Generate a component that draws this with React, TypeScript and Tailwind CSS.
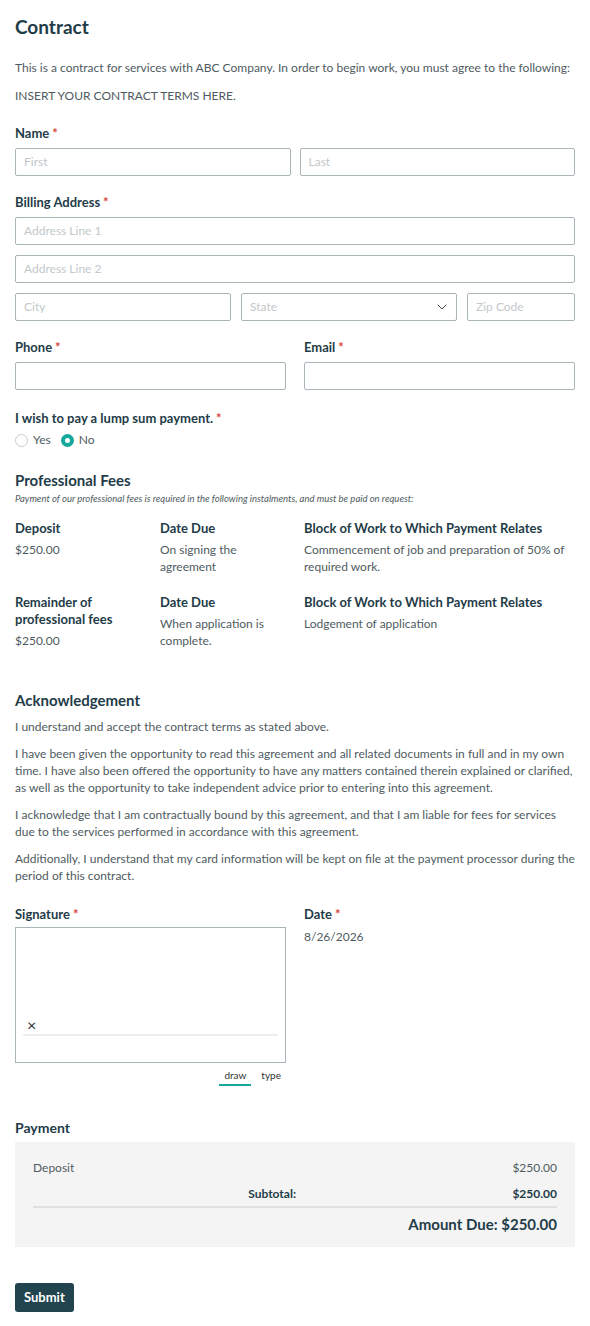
import { ChevronDown } from 'lucide-react';

const font = { fontFamily: 'Lato, "Open Sans", sans-serif' };

function Req() {
  return <span className="ml-[3px] text-[#d9423b]">*</span>;
}

function Label({ children, required = true }: { children: React.ReactNode; required?: boolean }) {
  return (
    <div className="mb-[7px] text-[13px] font-bold leading-[16px] text-[#1f3c48]">
      {children}
      {required && <Req />}
    </div>
  );
}

function Field({ placeholder = '', className = '' }: { placeholder?: string; className?: string }) {
  return (
    <div
      className={`flex h-[28px] items-center rounded-[2px] border border-[#a9b5b8] px-[8px] text-[12px] text-[#c3c8ca] ${className}`}
    >
      {placeholder}
    </div>
  );
}

export default function App() {
  return (
    <div className="min-h-[1326px] bg-white px-[15px] pt-[16px] text-[12px] text-[#4f5b61]" style={font}>
      {/* header */}
      <h1 className="text-[19px] font-bold leading-[22px] text-[#1f3c48]">Contract</h1>
      <p className="mt-[22px] leading-[16px]">
        This is a contract for services with ABC Company. In order to begin work, you must agree to the following:
      </p>
      <p className="mt-[12px] leading-[16px]">INSERT YOUR CONTRACT TERMS HERE.</p>

      {/* name */}
      <div className="mt-[21px]">
        <Label>Name</Label>
        <div className="flex gap-[9px]">
          <Field placeholder="First" className="flex-1" />
          <Field placeholder="Last" className="flex-1" />
        </div>
      </div>

      {/* billing address */}
      <div className="mt-[18px]">
        <Label>Billing Address</Label>
        <div className="flex flex-col gap-[10px]">
          <Field placeholder="Address Line 1" />
          <Field placeholder="Address Line 2" />
          <div className="flex gap-[10px]">
            <Field placeholder="City" className="w-[216px]" />
            <div className="flex h-[28px] w-[216px] items-center justify-between rounded-[2px] border border-[#a9b5b8] pl-[8px] pr-[6px] text-[12px] text-[#c3c8ca]">
              State
              <ChevronDown className="h-[16px] w-[16px] text-[#4a4a4a]" strokeWidth={1.5} />
            </div>
            <Field placeholder="Zip Code" className="flex-1" />
          </div>
        </div>
      </div>

      {/* phone / email */}
      <div className="mt-[18px] flex gap-[18px]">
        <div className="flex-1">
          <Label>Phone</Label>
          <Field />
        </div>
        <div className="flex-1">
          <Label>Email</Label>
          <Field />
        </div>
      </div>

      {/* lump sum */}
      <div className="mt-[20px]">
        <Label>I wish to pay a lump sum payment.</Label>
        <div className="-mt-[2px] flex items-center gap-[10px] text-[12px]">
          <label className="flex items-center gap-[5px]">
            <span className="h-[13px] w-[13px] rounded-full border border-[#c9cdcf] bg-white" />
            Yes
          </label>
          <label className="flex items-center gap-[5px]">
            <span className="flex h-[13px] w-[13px] items-center justify-center rounded-full bg-[#16a89b]">
              <span className="h-[5px] w-[5px] rounded-full bg-white" />
            </span>
            No
          </label>
        </div>
      </div>

      {/* professional fees */}
      <div className="mt-[22px]">
        <h2 className="text-[15px] font-bold leading-[18px] text-[#1f3c48]">Professional Fees</h2>
        <p className="mt-[3px] text-[9.5px] italic leading-[13px] text-[#4f5b61]">
          Payment of our professional fees is required in the following instalments, and must be paid on request:
        </p>

        <div className="mt-[15px] grid grid-cols-[145px_144px_1fr] leading-[17px]">
          <div>
            <div className="text-[13px] font-bold text-[#1f3c48]">Deposit</div>
            <div className="mt-[4px]">$250.00</div>
          </div>
          <div>
            <div className="text-[13px] font-bold text-[#1f3c48]">Date Due</div>
            <div className="mt-[4px] pr-[20px]">On signing the agreement</div>
          </div>
          <div>
            <div className="text-[13px] font-bold text-[#1f3c48]">Block of Work to Which Payment Relates</div>
            <div className="mt-[4px]">Commencement of job and preparation of 50% of required work.</div>
          </div>

          <div className="mt-[19px]">
            <div className="pr-[10px] text-[13px] font-bold text-[#1f3c48]">Remainder of professional fees</div>
            <div className="mt-[4px]">$250.00</div>
          </div>
          <div className="mt-[19px]">
            <div className="text-[13px] font-bold text-[#1f3c48]">Date Due</div>
            <div className="mt-[4px] pr-[20px]">When application is complete.</div>
          </div>
          <div className="mt-[19px]">
            <div className="text-[13px] font-bold text-[#1f3c48]">Block of Work to Which Payment Relates</div>
            <div className="mt-[4px]">Lodgement of application</div>
          </div>
        </div>
      </div>

      {/* acknowledgement */}
      <div className="mt-[42px]">
        <h2 className="text-[15px] font-bold leading-[18px] text-[#1f3c48]">Acknowledgement</h2>
        <div className="mt-[9px] flex flex-col gap-[10px] leading-[17px]">
          <p>I understand and accept the contract terms as stated above.</p>
          <p>
            I have been given the opportunity to read this agreement and all related documents in full and in my own
            time. I have also been offered the opportunity to have any matters contained therein explained or clarified,
            as well as the opportunity to take independent advice prior to entering into this agreement.
          </p>
          <p>
            I acknowledge that I am contractually bound by this agreement, and that I am liable for fees for services due
            to the services performed in accordance with this agreement.
          </p>
          <p>
            Additionally, I understand that my card information will be kept on file at the payment processor during the
            period of this contract.
          </p>
        </div>
      </div>

      {/* signature / date */}
      <div className="mt-[22px] flex gap-[18px]">
        <div className="w-[271px]">
          <div className="mb-[5px] text-[13px] font-bold leading-[16px] text-[#1f3c48]">
            Signature
            <Req />
          </div>
          <div className="flex h-[136px] flex-col justify-end border border-[#a9b5b8] px-[7px] pb-[26px]">
            <div className="pl-[4px] text-[16px] leading-[16px] text-[#333]">×</div>
            <div className="mt-[1px] h-[2px] bg-[#eeeeee]" />
          </div>
          <div className="mt-[5px] flex justify-end gap-[10px] pr-[5px] text-[10px] leading-[14px] text-[#333]">
            <span className="border-b-2 border-[#16a89b] px-[5px] pb-[2px]">draw</span>
            <span className="pb-[2px]">type</span>
          </div>
        </div>
        <div className="flex-1">
          <Label>Date</Label>
          <div className="leading-[16px]">8/26/2026</div>
        </div>
      </div>

      {/* payment */}
      <div className="mt-[33px]">
        <h2 className="text-[14px] font-bold leading-[18px] text-[#1f3c48]">Payment</h2>
        <div className="mt-[5px] bg-[#f4f4f4] px-[18px] pb-[13px] pt-[18px]">
          <div className="flex justify-between leading-[16px]">
            <span>Deposit</span>
            <span>$250.00</span>
          </div>
          <div className="mt-[10px] flex border-b-2 border-[#e0e0e0] pb-[4px] font-bold leading-[16px] text-[#1f3c48]">
            <span className="w-[263px] text-right">Subtotal:</span>
            <span className="flex-1 text-right">$250.00</span>
          </div>
          <div className="mt-[6px] text-right text-[15px] font-bold leading-[20px] text-[#1f3c48]">
            Amount Due: $250.00
          </div>
        </div>
      </div>

      <button className="mt-[36px] h-[29px] rounded-[3px] bg-[#22444f] px-[9px] text-[13px] font-bold text-white">
        Submit
      </button>
    </div>
  );
}
